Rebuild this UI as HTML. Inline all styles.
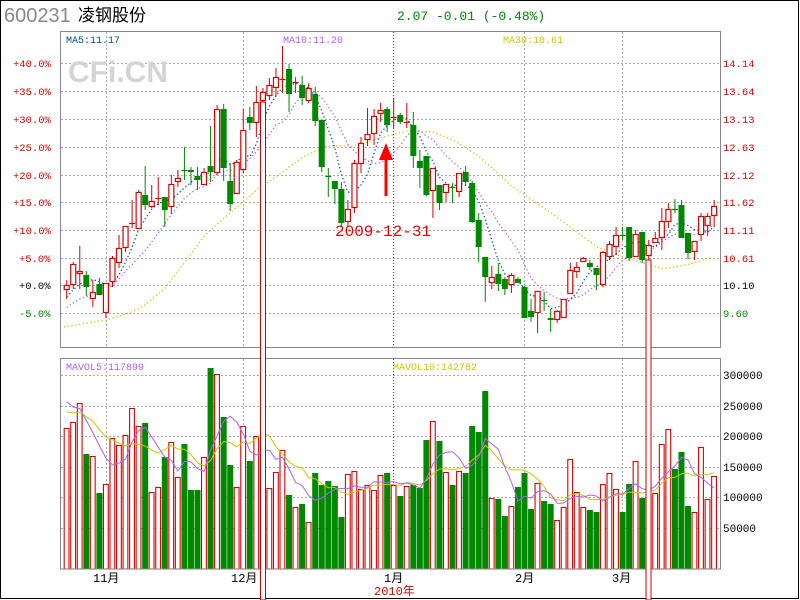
<!DOCTYPE html>
<html><head><meta charset="utf-8"><style>
html,body{margin:0;padding:0;background:#fff;}
svg{display:block}
text{font-family:"Liberation Mono","Noto Sans CJK SC",monospace;}
</style></head><body>
<svg id="s" width="800" height="600" xmlns="http://www.w3.org/2000/svg">
<rect x="0.5" y="0.5" width="798" height="598" fill="#fff" stroke="#000"/>
<text x="4" y="22" font-family="Liberation Sans,sans-serif" font-size="20" fill="#888" style="font-family:'Liberation Sans',sans-serif">600231</text>
<text x="78" y="21" font-size="17" fill="#000" style="font-family:'Liberation Sans','Noto Sans CJK SC',sans-serif">凌钢股份</text>
<text x="397" y="20" font-size="13" fill="#080">2.07 -0.01 (-0.48%)</text>
<g id="grid"></g>
<text x="68" y="82" font-size="30" font-weight="bold" fill="#d4d4d4" style="font-family:'Liberation Sans',sans-serif">CFi.CN</text>
<g id="chart"></g>
<rect x="60.5" y="31.5" width="660" height="316" fill="none" stroke="#888"/>
<rect x="60.5" y="358.5" width="660" height="210.5" fill="none" stroke="#888"/>
<text x="66" y="43" font-size="10" fill="#0050a0">MA5:11.17</text>
<text x="283" y="43" font-size="10" fill="#b060ff">MA10:11.20</text>
<text x="503" y="43" font-size="10" fill="#c8c800">MA30:10.61</text>
<text x="66" y="370" font-size="10" fill="#b060ff">MAVOL5:117899</text>
<text x="393" y="370" font-size="10" fill="#c8c800">MAVOL10:142782</text>
<g font-size="10.5">
<text x="13" y="67" fill="#d00">+40.0%</text><text x="13" y="95" fill="#d00">+35.0%</text>
<text x="13" y="123" fill="#d00">+30.0%</text><text x="13" y="151" fill="#d00">+25.0%</text>
<text x="13" y="179" fill="#d00">+20.0%</text><text x="13" y="206" fill="#d00">+15.0%</text>
<text x="13" y="234" fill="#d00">+10.0%</text><text x="19" y="262" fill="#d00">+5.0%</text>
<text x="19" y="289" fill="#000">+0.0%</text><text x="19" y="317" fill="#080">-5.0%</text>
<text x="723" y="67" fill="#d00">14.14</text><text x="723" y="95" fill="#d00">13.64</text>
<text x="723" y="123" fill="#d00">13.13</text><text x="723" y="151" fill="#d00">12.63</text>
<text x="723" y="179" fill="#d00">12.12</text><text x="723" y="206" fill="#d00">11.62</text>
<text x="723" y="234" fill="#d00">11.11</text><text x="723" y="262" fill="#d00">10.61</text>
<text x="723" y="289" fill="#000">10.10</text><text x="723" y="317" fill="#080">9.60</text>
</g>
<g font-size="11" fill="#000" style="font-family:'Liberation Sans',sans-serif">
<text x="723" y="379">300000</text><text x="723" y="410">250000</text>
<text x="723" y="440">200000</text><text x="723" y="471">150000</text>
<text x="723" y="501">100000</text><text x="723" y="532">50000</text>
</g>
<g font-size="12" style="font-family:'Liberation Sans','Noto Sans CJK SC',sans-serif">
<text x="93" y="582">11月</text><text x="231" y="582">12月</text>
<text x="384" y="582">1月</text><text x="515" y="582">2月</text>
<text x="612" y="582">3月</text><text x="374" y="595" fill="#d00">2010年</text>
</g>
<text x="335" y="236" font-size="16" fill="#e00">2009-12-31</text>
<path d="M384.5 196 V160 H379 L386 143 L393 160 H387.5 V196 Z" fill="#f00"/>
<rect x="260.5" y="102" width="5" height="498" fill="#fff" stroke="#c00"/>
<rect x="646" y="260" width="5" height="340" fill="#fff" stroke="#c00"/>
</svg>
<script>
var NS="http://www.w3.org/2000/svg";
function el(p,t,a){var e=document.createElementNS(NS,t);for(var k in a)e.setAttribute(k,a[k]);p.appendChild(e);return e;}
var g=document.getElementById('grid'),c=document.getElementById('chart');
[63,91,119,147,175,202,230,258,285,313].forEach(function(y){el(g,'line',{x1:61,x2:720,y1:y+.5,y2:y+.5,stroke:'#aaa','stroke-dasharray':'2,2'});});
[375,406,436,467,497,528].forEach(function(y){el(g,'line',{x1:61,x2:720,y1:y+.5,y2:y+.5,stroke:'#aaa','stroke-dasharray':'2,2'});});
[106,243,524,622].forEach(function(x){el(g,'line',{x1:x+.5,x2:x+.5,y1:32,y2:347,stroke:'#aaa','stroke-dasharray':'2,2'});el(g,'line',{x1:x+.5,x2:x+.5,y1:359,y2:568,stroke:'#aaa','stroke-dasharray':'2,2'});});
el(g,'line',{x1:393.5,x2:393.5,y1:32,y2:347,stroke:'#e00','stroke-dasharray':'1,2'});
el(g,'line',{x1:393.5,x2:393.5,y1:359,y2:568,stroke:'#e00','stroke-dasharray':'1,2'});
var D=[[285,289,280,299,'r'],[264,284,262,289,'r'],[271,273,246,289,'r'],[275,286,271,296,'g'],[292,298,280,307,'r'],[284,294,278,295,'g'],[283,312,283,318,'r'],[258,281,256,287,'r'],[248,262,235,268,'r'],[226,247,226,252,'r'],
[223,223,200,228,'r'],[192,228,190,228,'r'],[195,204,166,210,'g'],[201,206,185,208,'r'],[198,198,177,205,'r'],[197,209,197,227,'g'],[184,206,175,214,'r'],[178,181,170,187,'r'],[170,170,147,180,'g'],[170,171,167,185,'g'],
[176,179,167,190,'g'],[172,184,168,185,'r'],[166,171,126,182,'g'],[109,172,105,175,'r'],[109,167,104,181,'g'],[181,203,163,211,'g'],[162,193,160,193,'r'],[130,169,109,173,'r'],[117,122,107,130,'g'],[102,122,86,137,'r'],
[92,100,88,105,'r'],[85,95,78,100,'r'],[77,87,68,97,'r'],[79,79,46,93,'r'],[69,93,64,112,'g'],[82,82,77,93,'r'],[85,97,76,105,'g'],[88,100,83,103,'r'],[94,120,87,126,'g'],[120,166,120,172,'g'],
[176,176,168,197,'g'],[181,188,181,204,'g'],[189,222,182,227,'g'],[209,221,200,227,'r'],[163,207,160,213,'r'],[143,163,137,173,'r'],[134,139,108,146,'r'],[116,133,109,145,'r'],[110,113,103,122,'r'],[109,124,107,132,'g'],
[117,117,98,128,'r'],[115,121,113,124,'g'],[122,122,103,128,'r'],[125,155,112,168,'g'],[161,167,150,188,'g'],[156,194,156,196,'g'],[168,190,168,218,'r'],[185,202,185,210,'g'],[184,192,184,202,'r'],[187,187,183,203,'g'],
[173,191,173,197,'r'],[172,181,166,185,'g'],[183,221,181,223,'g'],[220,246,213,262,'g'],[257,276,257,302,'g'],[277,282,266,289,'r'],[274,283,263,291,'g'],[279,288,277,295,'g'],[275,284,273,293,'r'],[279,282,277,283,'g'],
[287,317,286,318,'g'],[311,316,299,322,'g'],[291,312,291,333,'r'],[300,300,292,311,'g'],[318,319,309,332,'g'],[311,319,310,323,'r'],[299,317,299,318,'r'],[270,293,263,293,'r'],[267,271,262,278,'r'],[258,261,257,262,'r'],
[263,266,260,270,'g'],[268,274,268,290,'g'],[252,284,251,287,'r'],[244,256,241,260,'r'],[235,246,227,255,'r'],[235,235,227,240,'g'],[227,257,227,261,'g'],[234,256,230,257,'r'],[232,259,232,263,'g'],[245,255,240,262,'r'],
[238,242,232,243,'r'],[221,237,208,250,'r'],[209,221,203,228,'r'],[209,209,199,213,'g'],[205,237,200,238,'g'],[233,252,233,259,'g'],[241,251,241,260,'r'],[216,234,213,241,'r'],[216,225,213,236,'r'],[206,215,200,227,'r']];
var V=[428,422,403,454,456,493,484,438,445,435,408,426,423,492,487,457,442,477,444,490,490,457,368,374,417,465,487,426,461,436,440,488,472,450,495,507,504,522,473,485,481,486,517,474,471,489,485,490,475,473,485,496,486,485,488,440,421,441,472,485,471,473,426,432,391,498,499,516,506,487,473,509,483,501,504,520,507,459,492,507,510,512,484,473,489,512,484,461,498,495,493,444,429,469,452,506,512,447,499,476];
function X(i){return 66.7+6.54*i;}
var RED='#d00',GRN='#080';
// MA30 dotted
var m30=[[64,327],[106,320],[132,312],[145,305],[165,288],[185,262],[205,235],[230,213],[250,196],[262,185],[270,181],[303,157],[327,146],[353,146],[380,138],[407,131],[433,132],[457,142],[477,155],[500,175],[510,185],[550,212],[597,247],[623,257],[647,264],[663,269],[690,264],[713,257]];
el(c,'polyline',{points:m30.map(function(p){return p.join(',')}).join(' '),fill:'none',stroke:'#c8c800','stroke-width':1.3,'stroke-dasharray':'1.3,2.5'});
var closes=D.map(function(d){return d[4]=='r'?d[0]:d[1];});
function ma(arr,n,off){return arr.map(function(v,i){var s=0,k=0;for(var j=Math.max(0,i-n+1);j<=i;j++){s+=arr[j];k++;}if(k<n&&off!==undefined){s+=off*(n-k);k=n;}return s/k;});}
var m5=ma(closes,5,300),m10=ma(closes,10,310);
function pl(a,st,dash,w){el(c,'polyline',{points:a.map(function(v,i){return X(i).toFixed(1)+','+v.toFixed(1)}).join(' '),fill:'none',stroke:st,'stroke-width':w||1.3,'stroke-dasharray':dash||''});}
pl(m10.slice(),'#b060ff','1.3,2.5');
pl(m5,'#0050a0','1.3,2.5');
// candles
D.forEach(function(d,i){var x=X(i),col=d[4]=='r'?RED:GRN;
 el(c,'line',{x1:x,x2:x,y1:d[2],y2:d[3],stroke:col,'stroke-width':1});
 var h=Math.max(d[1]-d[0],1);
 if(d[4]=='r'){ if(d[1]-d[0]<1){el(c,'line',{x1:x-3,x2:x+3,y1:d[0]+.5,y2:d[0]+.5,stroke:col,'stroke-width':1.2});}
  else el(c,'rect',{x:x-2.5,y:d[0]+.5,width:5,height:h,fill:'#fff',stroke:col,'stroke-width':1.2});}
 else { if(d[1]-d[0]<1){el(c,'line',{x1:x-3,x2:x+3,y1:d[0]+.5,y2:d[0]+.5,stroke:col,'stroke-width':1.2});}
  else el(c,'rect',{x:x-3,y:d[0],width:6,height:h+1,fill:col});}
});
// volume
V.forEach(function(t,i){var x=X(i),col=D[i][4]=='r'?RED:GRN;
 if(D[i][4]=='r')el(c,'rect',{x:x-2.5,y:t+.5,width:4.8,height:568.5-t,fill:'#fff',stroke:col,'stroke-width':1.1});
 else el(c,'rect',{x:x-3,y:t,width:6,height:569-t,fill:col});});
var vh=V.map(function(t){return t;});
var v5=ma(vh,5,395),v10=ma(vh,10,410);
pl(v10,'#c8c800','',1);
pl(v5,'#b060ff','',1);
</script>
</body></html>
